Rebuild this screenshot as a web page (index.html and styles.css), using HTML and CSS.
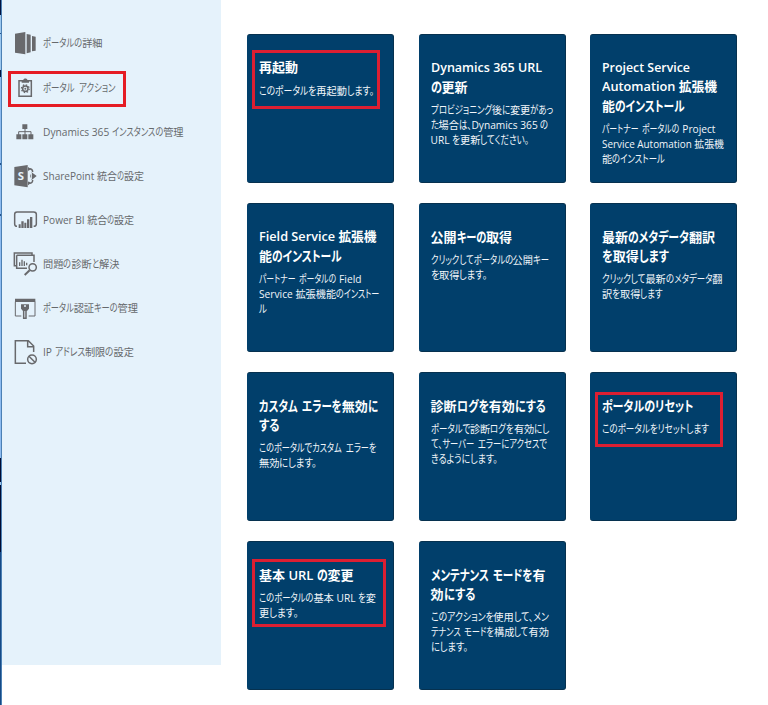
FILE: index.html
```html
<!DOCTYPE html>
<html lang="ja">
<head>
<meta charset="utf-8">
<title>ポータル アクション</title>
<link rel="stylesheet" href="styles.css">
</head>
<body>
<div class="edge"></div>
<nav class="sidebar">
  <a class="item"><svg class="icon" viewBox="39 92 78 78"><path d="M45 103l31-5v67l-31-5zM80 104l12 2v53l-12 3zM96 110l11 2v42l-11 2z"/></svg><span class="line" data-w="59.5">ポータルの詳細</span></a>
  <a class="item"><svg class="icon" viewBox="39 225 78 78"><path class="s" d="M57 242h37v47H57z"/><path d="M65 240h5c0-6 12-6 12 0h5v8H65z"/><circle class="s" cx="76" cy="266" r="8"/><circle class="s dots" cx="76" cy="266" r="11.5"/><circle cx="76" cy="266" r="3"/></svg><span class="line" data-w="72">ポータル アクション</span><i class="mark mark-nav"></i></a>
  <a class="item"><svg class="icon" viewBox="39 356 78 78"><path d="M67 372h15v14H67zM49 402h15v15H49zM67 402h15v15H67zM85 402h15v15H85z"/><path class="t" d="M75 384v20M56 404v-10h37v10"/></svg><span class="line" data-w="140.5">Dynamics 365 インスタンスの管理</span></a>
  <a class="item"><svg class="icon" viewBox="39 488 78 78"><path d="M43 500l40-6v67l-40-6z"/><path class="s" d="M88 505c8 0 10 5 10 10M88 549c8 0 10-5 10-10"/><path d="M84 500l9 6-9 7zM84 542l9 6-9 7zM95 516l15 11-15 12-5-12z"/><path class="w" d="M84 512l10 6v18l-10 7"/><text class="logo" x="53" y="540">S</text></svg><span class="line" data-w="101">SharePoint 統合の設定</span></a>
  <a class="item"><svg class="icon" viewBox="39 21 78 78"><path class="s" d="M51 79c-5 0-7-2-7-7V43c0-5 2-7 7-7h50c5 0 8 2 8 7v29c0 5-3 7-8 7"/><path d="M56 73h6v11h-6zM64 64h7v20h-7zM73 68h6v16h-6zM81 58h7v26h-7zM90 51h7v33h-7z"/></svg><span class="line" data-w="91.5">Power BI 統合の設定</span></a>
  <a class="item"><svg class="icon" viewBox="39 153 78 78"><path class="s" d="M49 197h-6v-38h53v6M50 166h52v20M50 166v39h31"/><path d="M57 187h4v11h-4zM64 179h4v19h-4zM71 184h4v14h-4zM78 188h4v8h-4z"/><circle class="s" cx="98" cy="202" r="11"/><path class="k" d="M89 211l-15 14"/></svg><span class="line" data-w="76.5">問題の診断と解決</span></a>
  <a class="item"><svg class="icon" viewBox="39 286 78 78"><path d="M45 297h61v10H45zM63 314h24v13l-6 7H69l-6-7z"/><path class="t" d="M64 349H46v-43M86 349h19v-43"/><path class="s" d="M71 331v25h7v-25"/><circle class="hole" cx="75" cy="319" r="3"/></svg><span class="line" data-w="95">ポータル認証キーの管理</span></a>
  <a class="item"><svg class="icon" viewBox="39 418 78 78"><path class="s" d="M78 491H46v-68h39l16 16v18M83 424v17h18"/><circle class="s" cx="96" cy="479" r="13"/><path class="s" d="M87 470l18 18"/></svg><span class="line" data-w="91">IP アドレス制限の設定</span></a>
</nav>
<main class="grid">
  <section class="card"><h2><span class="line" data-w="39">再起動</span></h2><p><span class="line" data-w="115">このポータルを再起動します。</span></p><i class="mark mark-restart"></i></section>
  <section class="card"><h2><span class="line" data-w="111">Dynamics 365 URL</span><span class="line" data-w="37">の更新</span></h2><p><span class="line" data-w="123">プロビジョニング後に変更があっ</span><span class="line" data-w="118">た場合は、Dynamics 365 の</span><span class="line" data-w="99">URL を更新してください。</span></p></section>
  <section class="card"><h2><span class="line" data-w="88">Project Service</span><span class="line" data-w="115">Automation 拡張機</span><span class="line" data-w="82.5">能のインストール</span></h2><p><span class="line" data-w="113.5">パートナー ポータルの Project</span><span class="line" data-w="122">Service Automation 拡張機</span><span class="line" data-w="63">能のインストール</span></p></section>
  <section class="card"><h2><span class="line" data-w="117.5">Field Service 拡張機</span><span class="line" data-w="82.5">能のインストール</span></h2><p><span class="line" data-w="102.5">パートナー ポータルの Field</span><span class="line" data-w="120.5">Service 拡張機能のインストー</span><span class="line" data-w="8">ル</span></p></section>
  <section class="card"><h2><span class="line" data-w="81.5">公開キーの取得</span></h2><p><span class="line" data-w="118.5">クリックしてポータルの公開キー</span><span class="line" data-w="57">を取得します。</span></p></section>
  <section class="card"><h2><span class="line" data-w="113">最新のメタデータ翻訳</span><span class="line" data-w="66.5">を取得します</span></h2><p><span class="line" data-w="120.5">クリックして最新のメタデータ翻</span><span class="line" data-w="61">訳を取得します</span></p></section>
  <section class="card"><h2><span class="line" data-w="119">カスタム エラーを無効に</span><span class="line" data-w="20.5">する</span></h2><p><span class="line" data-w="117">このポータルでカスタム エラーを</span><span class="line" data-w="58">無効にします。</span></p></section>
  <section class="card"><h2><span class="line" data-w="115">診断ログを有効にする</span></h2><p><span class="line" data-w="119">ポータルで診断ログを有効にし</span><span class="line" data-w="116">て、サーバー エラーにアクセスで</span><span class="line" data-w="66.5">きるようにします。</span></p></section>
  <section class="card"><h2><span class="line" data-w="91.5">ポータルのリセット</span></h2><p><span class="line" data-w="107">このポータルをリセットします</span></p><i class="mark mark-reset"></i></section>
  <section class="card"><h2><span class="line" data-w="94.5">基本 URL の変更</span></h2><p><span class="line" data-w="117">このポータルの基本 URL を変</span><span class="line" data-w="39.5">更します。</span></p><i class="mark mark-url"></i></section>
  <section class="card"><h2><span class="line" data-w="115">メンテナンス モードを有</span><span class="line" data-w="44.5">効にする</span></h2><p><span class="line" data-w="118">このアクションを使用して、メン</span><span class="line" data-w="118.5">テナンス モードを構成して有効</span><span class="line" data-w="37">にします。</span></p></section>
</main>
<script src="fit.js"></script>
</body>
</html>
```
FILE: styles.css
```css
* { box-sizing: border-box; }
body {
  margin: 0;
  width: 768px;
  height: 705px;
  overflow: hidden;
  display: flex;
  align-items: flex-start;
  background: #fff;
  font-family: "Open Sans", "Noto Sans CJK JP", sans-serif;
  font-feature-settings: "palt";
}
.edge {
  width: 2px;
  height: 705px;
  border-right: 1px solid #4b80b4;
  background: linear-gradient(#00123f 0 15px, #9cc8ef 15px 33px, #24558e 33px 34px, #9cc8ef 34px 70px, #00123f 70px 77px, #8ebcf0 77px 163px, #24558e 163px 165px, #8ebcf0 165px 214px, #24558e 214px 216px, #8ebcf0 216px 458px, #000b32 458px 482px, #9cc8ef 482px 485px, #000b32 485px 552px, #164a86 552px);
}
.sidebar {
  width: 219px;
  height: 665px;
  padding: 21.4px 0 0 11px;
  background: #e5f2fb;
  color: #66696c;
  font-size: 10.2px;
}
.item {
  position: relative;
  display: flex;
  align-items: center;
  gap: 4px;
  height: 44.1px;
}
.item .line {
  height: 15px;
  line-height: 15px;
  margin-top: -1px;
}
.icon {
  width: 26px;
  height: 26px;
  flex: none;
  fill: #68696c;
}
.s, .t, .k, .w { fill: none; stroke: #68696c; stroke-width: 4.5; }
.t { stroke-width: 3; }
.k { stroke-width: 6; }
.w { stroke: #e5f2fb; stroke-width: 3; }
.dots { stroke-width: 4; stroke-dasharray: 4.5 4.5; }
.hole { fill: #e5f2fb; }
.logo { font: bold 34px "Open Sans", sans-serif; fill: #e5f2fb; }
.grid {
  margin: 34px 0 0 26px;
  display: grid;
  grid-template-columns: repeat(3, 147px);
  grid-auto-rows: 149px;
  column-gap: 24.5px;
  row-gap: 20px;
}
.card {
  position: relative;
  padding: 22.6px 0 0 12px;
  border: 1px solid #06314f;
  border-width: 1px 1px 1px 0;
  border-radius: 3px;
  background: #013f6b;
  color: #fff;
}
h2 {
  margin: 0 0 7.6px;
  font-size: 13px;
  font-weight: 600;
  line-height: 19px;
}
p {
  margin: 0;
  font-size: 10.2px;
  line-height: 14.8px;
  color: #f2f6fa;
}
.line { display: block; white-space: pre; width: max-content; }
.card .line { height: 1lh; }
.run { display: inline-block; vertical-align: baseline; transform-origin: 0 50%; }
.kana { font-size: 1.08em; }
.gap { word-spacing: 1.2px; }
.mark { position: absolute; border: 3px solid #dc1f32; }
.mark-nav { left: -5px; top: 6px; width: 118px; height: 36px; border-color: #e51c24; }
.mark-restart { left: 5px; top: 15px; width: 128px; height: 59px; }
.mark-reset { left: 4.5px; top: 19px; width: 128px; height: 55px; }
.mark-url { left: 5px; top: 17px; width: 134px; height: 68px; }
```
FILE: fit.js
```js
// Condenses the kana of each line so the line has its set width; kanji and Latin keep theirs.
const kana = /[\u3000-\u30ff]/;
document.querySelectorAll('.line').forEach(line => {
  const target = Number(line.dataset.w);
  const parts = line.textContent.match(/[\u3000-\u30ff]+|[^\u3000-\u30ff]+/g);
  line.textContent = '';
  const runs = parts.map(text => {
    const el = document.createElement('span');
    const flexible = kana.test(text);
    el.className = flexible ? 'run kana' : text === ' ' ? 'run gap' : 'run';
    el.textContent = text;
    line.append(el);
    return { el, flexible };
  });
  runs.forEach(r => { r.width = r.el.getBoundingClientRect().width; });
  const sum = list => list.reduce((total, r) => total + r.width, 0);
  const flexible = runs.filter(r => r.flexible);
  let fixedScale = 1;
  let scale = 1;
  if (flexible.length) {
    scale = (target - sum(runs.filter(r => !r.flexible))) / sum(flexible);
    const limited = Math.min(1.05, Math.max(0.65, scale));
    if (limited !== scale) {
      scale = limited;
      fixedScale = (target - sum(flexible) * scale) / sum(runs.filter(r => !r.flexible));
      if (!Number.isFinite(fixedScale)) scale = target / sum(flexible);
    }
  } else {
    fixedScale = target / sum(runs);
  }
  runs.forEach(r => {
    const s = r.flexible ? scale : fixedScale;
    r.el.style.width = r.width * s + 'px';
    r.el.style.transform = `scaleX(${s})`;
  });
});
```
